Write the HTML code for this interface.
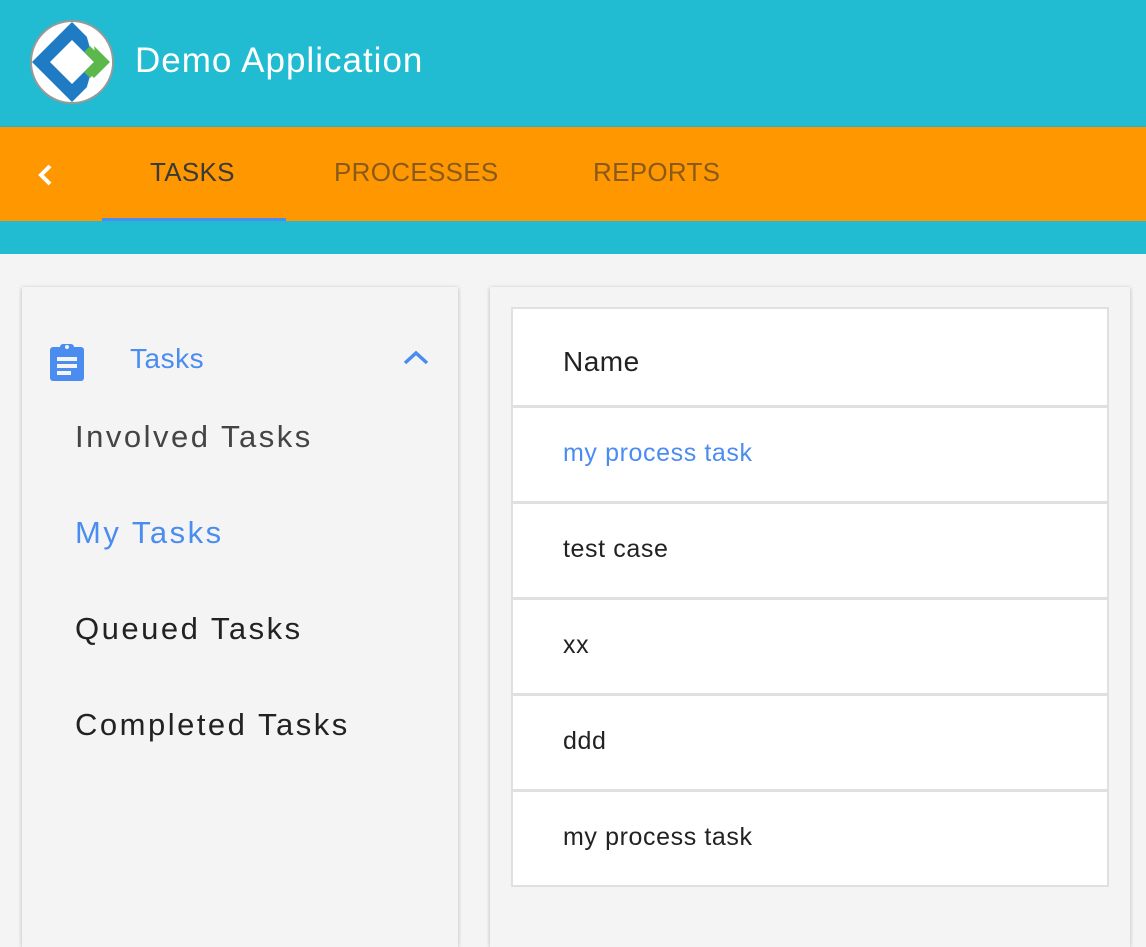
<!DOCTYPE html>
<html><head><style>
*{margin:0;padding:0;box-sizing:border-box}
body{width:1146px;height:926px;overflow:hidden;background:#f4f4f4;font-family:"Liberation Sans",sans-serif;position:relative}
.hdr{position:absolute;left:0;top:0;width:1146px;height:127px;background:#21bcd2}
.logo{position:absolute;left:30px;top:20px;width:84px;height:84px;border-radius:50%;background:#fff;border:2px solid #999;overflow:hidden}
.title{position:absolute;left:135px;top:41px;color:#fff;font-size:35px;letter-spacing:1px}
.nav{position:absolute;left:0;top:127px;width:1146px;height:94px;background:#ff9800;box-shadow:0 2px 4px rgba(0,0,0,.3)}
.tab{position:absolute;top:30px;font-size:26px;color:#8a5a1a;letter-spacing:.3px}
.ul{position:absolute;left:102px;top:91px;width:184px;height:4px;background:#4a8cf0}
.strip{position:absolute;left:0;top:221px;width:1146px;height:33px;background:#21bcd2}
.card{position:absolute;background:#f4f4f4;box-shadow:0 1px 4px rgba(0,0,0,.25)}
.item{position:absolute;left:75px;font-size:31px;letter-spacing:2.5px;color:#222}
.tbl{position:absolute;left:511px;top:307px;width:598px;border:2px solid #e0e0e0;background:#fff}
.row{height:96px;border-top:3px solid #e0e0e0;padding-left:50px;line-height:91px;font-size:25px;letter-spacing:.6px;color:#222}
</style></head><body>
<div class="hdr">
 <div class="logo"><svg width="84" height="84" viewBox="0 0 84 84" style="position:absolute;left:-2px;top:-2px">
  <polygon points="42,2 82,42 42,82 2,42" fill="#1e7bc4"/>
  <polygon points="42,20 64,42 42,64 20,42" fill="#fff"/>
  <polygon points="56,14 90,48 90,84 56,70 64,42" fill="#fff"/>
  <polygon points="60,26 76,42 60,58 54,52 64,42 54,32" fill="#5cb84a"/>
  <polygon points="64,26 80,42 64,58 58,52 66,42" fill="#5cb84a"/>
 </svg></div>
 <div class="title">Demo Application</div>
</div>
<div class="nav">
 <svg style="position:absolute;left:36px;top:36px" width="20" height="24" viewBox="0 0 20 24"><path d="M14 3 L5 12 L14 21" stroke="#fff" stroke-width="4" fill="none"/></svg>
 <div class="tab" style="left:150px;color:#3a3a3a">TASKS</div>
 <div class="tab" style="left:334px">PROCESSES</div>
 <div class="tab" style="left:593px">REPORTS</div>
 <div class="ul"></div>
</div>
<div class="strip"></div>
<div class="card" style="left:22px;top:287px;width:436px;height:660px">
 <svg style="position:absolute;left:26px;top:56px" width="38" height="40" viewBox="0 0 38 40"><rect x="2" y="4" width="34" height="34" rx="3" fill="#4a8cf0"/><rect x="12" y="1" width="14" height="7" rx="3" fill="#4a8cf0"/><circle cx="19" cy="4" r="2" fill="#f4f4f4"/><rect x="9" y="14" width="20" height="4" fill="#f4f4f4"/><rect x="9" y="21" width="20" height="4" fill="#f4f4f4"/><rect x="9" y="28" width="14" height="4" fill="#f4f4f4"/></svg>
 <div style="position:absolute;left:108px;top:56px;font-size:28px;letter-spacing:.5px;color:#4a8cf0">Tasks</div>
 <svg style="position:absolute;left:380px;top:62px" width="28" height="18" viewBox="0 0 28 18"><path d="M3 14 L14 4 L25 14" stroke="#4a8cf0" stroke-width="3.5" fill="none"/></svg>
</div>
<div class="item" style="top:419px;color:#444">Involved Tasks</div>
<div class="item" style="top:515px;color:#4a8cf0">My Tasks</div>
<div class="item" style="top:611px">Queued Tasks</div>
<div class="item" style="top:707px">Completed Tasks</div>
<div class="card" style="left:490px;top:287px;width:640px;height:660px"></div>
<div class="tbl">
 <div style="height:96px;line-height:106px;padding-left:50px;font-size:28px;letter-spacing:.5px;color:#222">Name</div>
 <div class="row" style="color:#4a8cf0">my process task</div>
 <div class="row">test case</div>
 <div class="row">xx</div>
 <div class="row">ddd</div>
 <div class="row">my process task</div>
</div>
</body></html>
